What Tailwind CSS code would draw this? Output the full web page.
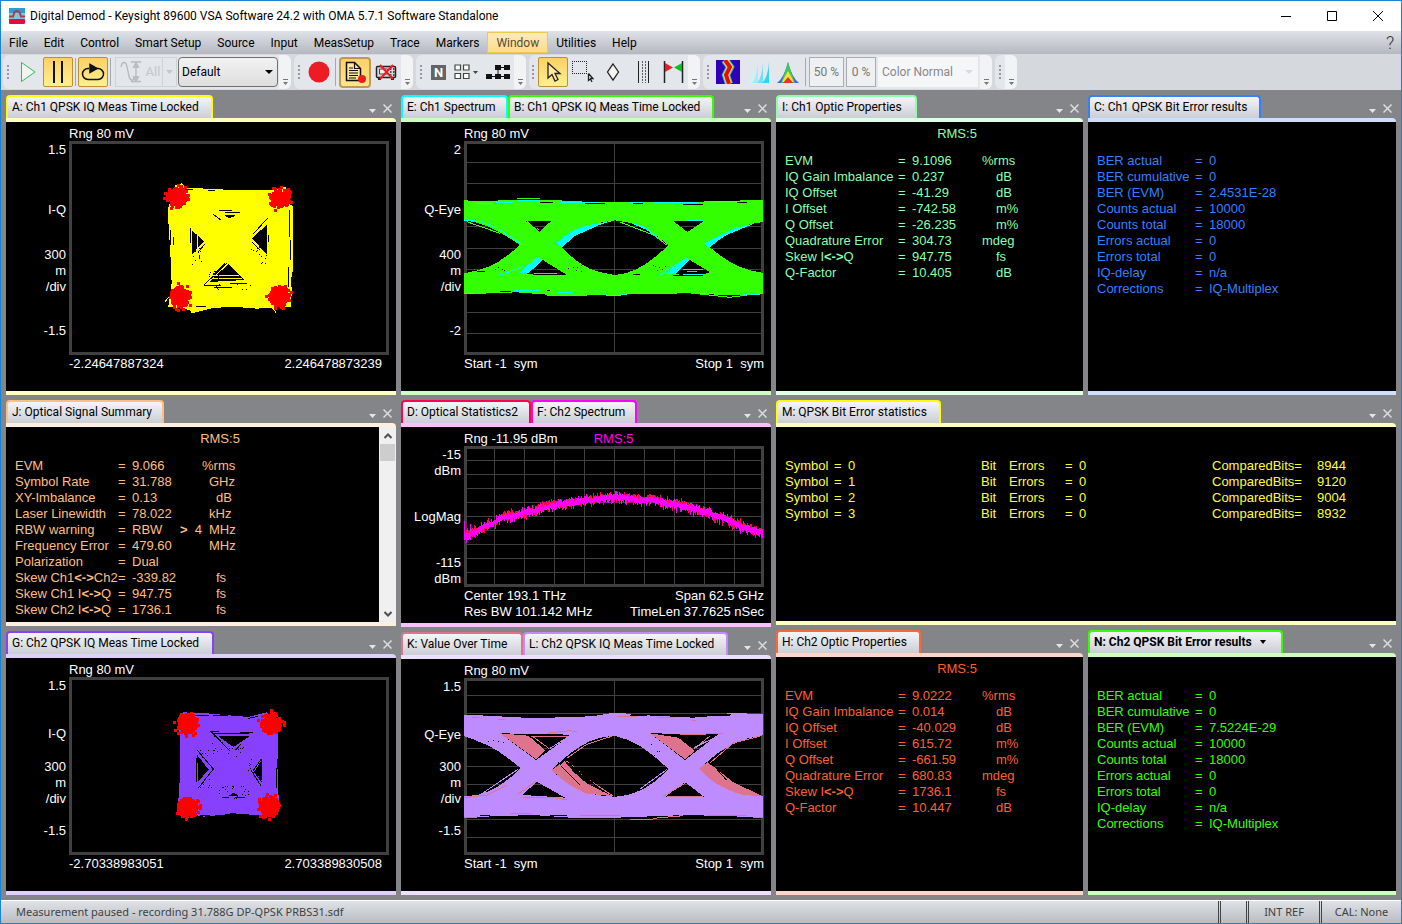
<!DOCTYPE html>
<html lang="en">
<head>
  <meta charset="UTF-8" />
  <meta name="viewport" content="width=device-width, initial-scale=1.0"/>
  <title>Digital Demod - Keysight 89600 VSA Software</title>
  <script src="https://cdn.jsdelivr.net/npm/@tailwindcss/browser@4"></script>
</head>
<body class="h-screen flex flex-col overflow-hidden border border-[#1883d7] bg-[#838589] font-['Roboto','Noto_Sans',sans-serif] text-xs text-black">

  <!-- Title bar -->
  <header class="h-[30px] shrink-0 bg-white flex items-center pl-2">
    <svg class="w-4 h-4 mr-[5px]" viewBox="0 0 16 16">
      <rect width="16" height="12" fill="#7fc4e8"/><rect width="16" height="5" fill="#2e9ad6"/>
      <path d="M0 8.500h4l1.500-4.500q2.500-2 5 0l1.500 4.500h4" fill="none" stroke="#a8423f" stroke-width="2"/>
      <rect y="11" width="16" height="5" rx="1" fill="#e0103a"/>
    </svg>
    <h1 class="grow">Digital Demod - Keysight 89600 VSA Software 24.2 with OMA 5.7.1 Software Standalone</h1>
    <button aria-label="Minimize" class="w-[46px] h-full grid place-items-center"><svg class="w-3 h-3" viewBox="0 0 12 12" stroke="#000" fill="none"><path d="M1 6.500h10"/></svg></button>
    <button aria-label="Maximize" class="w-[46px] h-full grid place-items-center"><svg class="w-3 h-3" viewBox="0 0 12 12" stroke="#000" fill="none"><path d="M1.500 1.500h9v9h-9z"/></svg></button>
    <button aria-label="Close" class="w-[46px] h-full grid place-items-center"><svg class="w-3 h-3" viewBox="0 0 12 12" stroke="#000" fill="none"><path d="M1 1l10 10M11 1L1 11"/></svg></button>
  </header>

  <!-- Menu -->
  <nav class="h-[23px] shrink-0 flex items-center bg-linear-to-b from-[#dfe2e7] to-[#b5b8be]">
    <div id="menu" class="flex grow h-full items-center"></div>
    <button aria-label="Help" class="w-[22px] text-lg font-light text-[#333]">?</button>
  </nav>

  <!-- Toolbar -->
  <div class="h-9 shrink-0 flex items-center gap-[3px] pl-0.5 bg-[#d5d8dd]">
    <div class="w-[288px] h-[34px] flex items-center rounded-md bg-[#e3e6eb]">
      <span class="grip w-[15px] pl-[4px]"></span>
      <button aria-label="Restart" class="w-[22px] mr-[3px]"><svg class="w-5 h-6" viewBox="0 0 20 24"><path d="M3.500 2.500v19L17 12z" fill="#eef5ee" stroke="#3fb54f"/></svg></button>
      <button aria-label="Pause" class="w-[30px] h-[30px] border border-[#c09030] rounded-xs bg-linear-to-b from-[#fbd068] to-[#fff08c] grid place-items-center"><svg class="w-4 h-6" viewBox="0 0 16 24"><path d="M4 1v22M12 1v22" stroke="#111" stroke-width="2"/></svg></button>
      <span class="w-px h-7 mx-[2px] bg-[#a5a8ad]"></span>
      <button aria-label="Repeat" class="w-[30px] h-[30px] border border-[#c09030] rounded-xs bg-linear-to-b from-[#fbd068] to-[#fff08c] grid place-items-center"><svg class="w-6 h-6" viewBox="0 0 24 24" fill="none" stroke="#111" stroke-width="1.500"><path d="M8 8.500H7a5.500 5.500 0 0 0 0 11h10a5.500 5.500 0 0 0 0-11h-3"/><path d="M9 4.500l7 4-7 4z" fill="#111"/></svg></button>
      <span class="w-px h-7 mx-[2px] bg-[#a5a8ad]"></span>
      <button disabled class="w-[62px] h-[30px] ml-[2px] border border-[#cfd2d6] flex items-center text-[#c3c6cb] text-[13px]">
        <svg class="w-[26px] h-6 ml-0.5" viewBox="0 0 26 24" fill="none" stroke="#b6b9be" stroke-width="1.300"><path d="M3 7C4 1 8 1 9 7l2 9c1 5 4 5 5 2M13 2h10M13 21.500h10M18 3v18M15.500 7L18 3l2.500 4zM15.500 17l2.500 4 2.500-4z"/></svg>
        <span class="w-[18px]">All</span>
        <span class="grow h-full border-l border-[#cfd2d6] grid place-items-center"><svg class="w-2 h-1" viewBox="0 0 8 4"><path d="M0 0h7L3.500 4z" fill="#c3c6cb"/></svg></span>
      </button>
      <div class="relative ml-px">
        <select aria-label="Preset" class="w-[100px] h-[30px] appearance-none border border-[#707070] rounded-sm bg-linear-to-b from-[#f2f2f2] to-[#dedede] pl-[3px]"><option>Default</option></select>
        <svg class="absolute right-[5px] top-[13px] w-2 h-1 pointer-events-none" viewBox="0 0 8 4"><path d="M0 0h8L4 4z"/></svg>
      </div>
      <span class="more"></span>
    </div>
    <div class="w-[119px] h-[34px] flex items-center rounded-md bg-[#e3e6eb]">
      <span class="grip w-[13px] pl-[4px]"></span>
      <button aria-label="Record" class="w-[26px]"><svg class="w-[22px] h-[22px] ml-px" viewBox="0 0 22 22"><circle cx="11" cy="11" r="10.500" fill="#ed1c24"/></svg></button>
      <span class="w-px h-7 mx-[2px] bg-[#a5a8ad]"></span>
      <button aria-label="Recording notes" class="w-8 h-[31px] ml-px border-2 border-[#c09a50] rounded-sm bg-linear-to-b from-[#fbd068] to-[#ffe58c] grid place-items-center"><svg class="w-[22px] h-[22px]" viewBox="0 0 22 22"><path d="M2.500 1.500h8l6 6v12h-14z" fill="#ffe9a0" stroke="#111" stroke-width="1.500"/><path d="M10.500 1.500v6h6M5 7h4M5 9.500h9M5 12h9M5 14.500h9M5 17h7" stroke="#111" stroke-width="1.200" fill="none"/><circle cx="18" cy="18" r="4" fill="#ed1c24"/></svg></button>
      <button aria-label="Disconnect hardware" class="w-[22px] ml-1"><svg class="w-[22px] h-5" viewBox="0 0 22 20"><rect x="1.500" y="4.500" width="19" height="11" rx="1" fill="#d8d8d8" stroke="#222" stroke-width="1.500"/><path d="M4.500 7h8v5h-8z" fill="#eee" stroke="#444"/><path d="M15 7h1.500M18 7h1.500M15 10h1.500M18 10h1.500M15 13h1.500M18 13h1.500" stroke="#222" stroke-width="1.500"/><path d="M3 17h3M16 17h3" stroke="#222" stroke-width="2"/><path d="M5 3l13 14M18 3L5 17" stroke="#ed1c24" stroke-width="2"/></svg></button>
      <span class="more"></span>
    </div>
    <div class="w-[110px] h-[34px] flex items-center rounded-md bg-[#e3e6eb]">
      <span class="grip w-[15px] pl-[4px]"></span>
      <button aria-label="Notes" class="w-[15px] h-[15px] bg-[#626468] text-white font-bold text-[13px] leading-[15px]">N</button>
      <button aria-label="Layout" class="ml-2 w-6 flex items-center gap-[3px]"><svg class="w-4 h-4" viewBox="0 0 16 16" fill="#fff" stroke="#444" stroke-width="1.200"><path d="M1 1h5.500v5H1zM9.500 1H15v5H9.500zM1 9.500h5.500v5H1zM9.500 9.500H15v5H9.500z"/></svg><svg class="w-[5px] h-[3px]" viewBox="0 0 5 3"><path d="M0 0h5L2.500 3z" fill="#444"/></svg></button>
      <button aria-label="Block diagram" class="ml-2"><svg class="w-6 h-4" viewBox="0 0 24 16"><path d="M9 1h6v5H9zM18 1h6v5h-6zM0 10h6v5H0zM9 10h6v5H9zM18 10h6v5h-6zM14 3h5v1h-5zM11.500 5h1v6h-1zM5 12h14v1H5z" fill="#111"/></svg></button>
      <span class="more"></span>
    </div>
    <div class="w-[171px] h-[34px] flex items-center rounded-md bg-[#e3e6eb]">
      <span class="grip w-[9px] pl-[3px]"></span>
      <button aria-label="Pointer" class="w-[30px] h-[30px] border border-[#c09030] rounded-xs bg-linear-to-b from-[#fbd068] to-[#fff08c] grid place-items-center"><svg class="w-5 h-6" viewBox="0 0 20 24"><path d="M5 3v15l4-3.500 3 6.500 3-1.500-3-6h5z" fill="#ffe9a0" stroke="#222" stroke-width="1.300"/></svg></button>
      <button aria-label="Select area" class="w-[22px] ml-1"><svg class="w-[22px] h-[22px]" viewBox="0 0 22 22" fill="none" stroke="#222"><path d="M0 .500h15M0 12.500h15M.500 0v13M14.500 0v13" stroke-dasharray="1 1"/><path d="M16.500 12.500v7l2-1.500 1.500 3M16.500 12.500l4.500 5h-3" stroke-width="1.300"/></svg></button>
      <button aria-label="Marker" class="w-4 ml-[11px]"><svg class="w-4 h-5" viewBox="0 0 16 20"><path d="M8 2l5.500 8L8 18l-5.500-8z" fill="#f4f4f4" stroke="#222" stroke-width="1.300"/></svg></button>
      <button aria-label="Band lines" class="w-4 ml-[17px]"><svg class="w-3 h-[22px]" viewBox="0 0 12 22" stroke="#222"><path d="M.500 0v22M10.500 0v22"/><path d="M4.500 0v22M7.500 0v22" stroke-dasharray="2 1" stroke-opacity=".7"/></svg></button>
      <button aria-label="Limits" class="w-[22px] ml-[9px]"><svg class="w-[22px] h-[22px]" viewBox="0 0 22 22"><path d="M1.500 0v22M19.500 0v22" stroke="#222" stroke-width="1.500"/><path d="M2 2l8 4.500L2 11z" fill="#ed1c24"/><path d="M19 2l-8 4.500 8 4.500z" fill="#08c020"/></svg></button>
      <span class="more"></span>
    </div>
    <div class="w-[289px] h-[34px] flex items-center rounded-md bg-[#e3e6eb]">
      <span class="grip w-[13px] pl-[4px]"></span>
      <button aria-label="Spectrogram" class="w-6"><svg class="w-6 h-6" viewBox="0 0 24 24" fill="none"><rect width="24" height="24" fill="#3000b8"/><path d="M9 0l5 7-4 8 3 9" stroke="#20c0e0" stroke-width="8"/><path d="M9 0l5 7-4 8 3 9" stroke="#ffe020" stroke-width="6"/><path d="M9 0l5 7-4 8 3 9" stroke="#e01010" stroke-width="4"/></svg></button>
      <button aria-label="Cumulative history" class="w-6 ml-2"><svg class="w-6 h-6" viewBox="0 0 24 24"><path d="M0 23Q5 18 5 2V23z" fill="#c8f4fb"/><path d="M4 23Q9 18 10 2V23z" fill="#a0ecfa"/><path d="M9 23Q14 18 15 2V23z" fill="#70e0fa"/><path d="M14 23Q20 18 21 2V23z" fill="#30d4fa"/></svg></button>
      <button aria-label="Digital persistence" class="w-6 ml-1"><svg class="w-6 h-6" viewBox="0 0 24 24"><path d="M1 23Q8 18 12 2q4 16 11 21z" fill="#4060e8"/><path d="M5 23Q9 12 12 2q3 10 7 21z" fill="#40c860"/><path d="M6 22l6-11 6 11z" fill="#ffe030"/><path d="M7 23l5-6 5 6z" fill="#e83030"/></svg></button>
      <span class="w-px h-7 ml-[5px] mr-[3px] bg-[#a5a8ad]"></span>
      <input aria-label="Persistence" value="50 %" disabled class="w-[35px] h-[30px] border border-[#a9adb3] bg-[#eef0f2] text-center text-[#777]">
      <input aria-label="Threshold" value="0 %" disabled class="w-[30px] h-[30px] ml-0.5 border border-[#a9adb3] bg-[#eef0f2] text-center text-[#777]">
      <div class="relative ml-0.5">
        <select aria-label="Color map" disabled class="w-[100px] h-[30px] appearance-none bg-[#f5f6f8] pl-1 text-[#888]"><option>Color Normal</option></select>
        <svg class="absolute right-[5px] top-[13px] w-2 h-1 pointer-events-none" viewBox="0 0 8 4"><path d="M0 0h8L4 4z" fill="#d8dadd"/></svg>
      </div>
      <span class="more"></span>
    </div>
    <div class="w-[22px] h-[34px] flex items-center rounded-md bg-[#e3e6eb]">
      <span class="grip w-[10px] pl-[4px]"></span>
      <span class="more"></span>
    </div>
  </div>

  <!-- Trace windows -->
  <main class="grow min-h-0 grid grid-cols-[390fr_370fr_620fr] gap-[5px] p-[5px]">
    <div id="left" class="min-h-0 grid grid-rows-[300fr_226fr_264fr] gap-[5px]"></div>
    <div id="middle" class="min-h-0 grid grid-rows-[300fr_227fr_263fr] gap-[5px]"></div>
    <div id="right" class="min-h-0 grid grid-rows-[300fr_225fr_265fr] grid-cols-[307fr_308fr] gap-[5px]"></div>
  </main>

  <!-- Status bar -->
  <footer class="h-[23px] shrink-0 flex items-center border-t border-white bg-linear-to-b from-[#dfe2e6] to-[#b9bcc1] pl-[15px] font-['Noto_Sans',sans-serif] text-[11px] text-[#404040]">
    <span class="grow">Measurement paused - recording 31.788G DP-QPSK PRBS31.sdf</span>
    <span class="h-full w-[28px] border-l-3 border-double border-[#444]"></span>
    <span class="h-full w-[73px] border-l-3 border-double border-[#444] grid place-items-center">INT REF</span>
    <span class="h-full w-[82px] border-l-3 border-double border-[#444] grid place-items-center">CAL: None</span>
  </footer>

  <script>
    // Menu
    const menu = ["File", "Edit", "Control", "Smart Setup", "Source", "Input", "MeasSetup", "Trace", "Markers", "Window", "Utilities", "Help"];
    document.getElementById("menu").innerHTML = menu.map(m => m === "Window"
      ? `<button class="h-[21px] px-2 border border-[#f0c850] bg-linear-to-b from-[#fdeab8] to-[#fbdc8c] text-[#5a4a30]">${m}</button>`
      : `<button class="px-2">${m}</button>`).join("");

    document.querySelectorAll(".grip").forEach(el => {
      el.innerHTML = `<svg class="w-[3px] h-[15px]" viewBox="0 0 3 15" fill="#96999f"><path d="M0 0h2v2H0zM0 4h2v2H0zM0 8h2v2H0zM0 12h2v2H0z"/></svg>`;
    });
    document.querySelectorAll(".more").forEach(el => {
      el.outerHTML = `<button aria-label="Toolbar options" class="ml-auto w-3 h-full rounded-r-md bg-[#f2f3f5] flex items-end justify-center pb-1"><svg class="w-[5px] h-[6px]" viewBox="0 0 5 6" fill="#777"><path d="M0 0h5v1H0zM0 3h5L2.500 6z"/></svg></button>`;
    });

    // Repeatable noise
    let seed = 7;
    function rnd() {
      seed = (seed * 16807) % 2147483647;
      return seed / 2147483647;
    }

    function blob(cx, cy) {
      let d = "";
      for (let i = 0; i < 150; i++) {
        const a = rnd() * 6.283;
        const r = Math.sqrt(rnd()) * 30 + (rnd() > 0.88 ? 10 : 0);
        d += `M${Math.round(cx + Math.cos(a) * r - 5)} ${Math.round(cy + Math.sin(a) * r - 5)}h9v9h-9z`;
      }
      return `<path d="${d}" fill="#f00"/><circle cx="${cx}" cy="${cy}" r="24" fill="#f00"/>`;
    }

    function specks(x, y, w, h, n) {
      let d = "";
      for (let i = 0; i < n; i++) d += `M${Math.round(x + rnd() * w)} ${Math.round(y + rnd() * h)}h3v3h-3z`;
      return `<path d="${d}" fill="#000"/>`;
    }

    function spectrum(color, bias) {
      const pts = [[192, 422], [240, 402], [310, 365], [380, 350], [430, 335], [540, 317], [640, 308], [750, 315], [830, 328], [910, 350], [980, 372], [1030, 395], [1090, 414]];
      let d = "", k = 0, drift = 0;
      for (let x = 193; x < 1090; x += 3) {
        while (x > pts[k + 1][0]) k++;
        const [x0, y0] = pts[k], [x1, y1] = pts[k + 1];
        drift = drift * 0.8 + (rnd() - 0.5) * 5;
        const y = y0 + (y1 - y0) * (x - x0) / (x1 - x0) + bias + drift;
        d += `M${x} ${Math.round(y - 5 - rnd() * rnd() * 16)}V${Math.round(y + 6 + rnd() * rnd() * 20)}`;
      }
      return `<path d="${d}M193 378v50M199 415v28M211 388v30M1087 402v28" stroke="${color}" stroke-width="3"/>`;
    }

    function plot(x, y, w, h, cols, rows, trace) {
      let d = "";
      for (let i = 1; i < cols; i++) d += `M${x + w * i / cols} ${y}v${h}`;
      for (let i = 1; i < rows; i++) d += `M${x} ${y + h * i / rows}h${w}`;
      return `<svg class="absolute inset-0 w-full h-full" viewBox="${x} ${y} ${w} ${h}" preserveAspectRatio="none" shape-rendering="crispEdges" fill="none">
        <path d="${d}" stroke="#404040" stroke-width="3"/>
        <rect x="${x + 4.5}" y="${y + 4.5}" width="${w - 9}" height="${h - 9}" stroke="#404040" stroke-width="9"/>
        ${trace}
      </svg>`;
    }

    const iq1 = `
      <path fill="#ff0" fill-rule="evenodd" d="M525 195L545 190 560 203 700 210 830 209 858 200 862 250 880 258 877 500 872 560 770 566 700 560 640 564 575 580 570 570 505 560 515 490 511 400 503 270zM672 285h34L700 292 684 293zM577 332L612 364 577 402zM800 315V402L755 355zM685 432L735 480 628 486z"/>
      <path stroke="#000" stroke-width="3" d="M556 208h22M625 211h20M670 209h26M766 208h50M512 330v45M519 350v24M868 270v80M872 360v60M864 440v60M874 470v30M614 372L592 400M640 283L662 300M658 270h38M675 276h46M570 325V370M806 345v20M802 295L760 342M756 366L780 390M612 495L680 430M638 466L676 430M612 495h50M690 490h50M642 502h55M588 558h30"/>
      <path stroke="#ff0" stroke-width="3" d="M592 330V400M640 474h85M640 466h76M495 545L512 525M815 560L828 578"/>`
      + specks(575, 380, 30, 55, 12) + specks(750, 370, 50, 65, 16) + specks(610, 440, 50, 55, 12) + specks(640, 490, 110, 18, 10)
      + blob(532, 234) + blob(840, 238) + blob(541, 532) + blob(838, 530);

    const iq2 = `
      <path fill="#8840ff" fill-rule="evenodd" d="M550 262L620 265 745 276 800 262 836 290 832 420 838 540 815 572 700 566 610 575 540 560 534 540 541 440 538 300zM655 334h93L700 366zM592 390L626 434 594 470zM785 405V465L763 440zM685 512L702 503 716 512z"/>
      <path stroke="#000" stroke-width="3" d="M580 270h48M640 270h45M745 280l30-6M634 320L688 376M636 326h110M630 318h26M720 322h40M724 356L706 376M588 400V470M592 376L640 432 596 488M786 472L760 436 784 402M752 434L784 484M666 518h22M704 518h32M828 430v60M834 440v70M600 572h30M690 564h18"/>`
      + specks(600, 370, 45, 30, 8) + specks(595, 460, 40, 30, 8) + specks(735, 400, 40, 50, 8) + specks(655, 480, 90, 40, 26) + specks(620, 330, 50, 50, 8) + specks(680, 365, 50, 30, 10)
      + blob(562, 298) + blob(814, 298) + blob(564, 548) + blob(810, 546);

    const eye1 = `
      <path fill="#3f0" fill-rule="evenodd" d="M192 241L240 243 350 240 420 240 590 246 720 246 860 246 1000 242 1089 240V522L1000 526 860 520 645 524 560 524 440 524 350 517 192 523zM192 300C260 310 300 335 360 375 300 430 260 448 192 460zM485 382C530 330 580 305 645 301 710 305 760 335 805 375 750 430 700 462 645 465 580 462 530 430 485 382zM930 382C980 335 1030 312 1089 305V459C1020 448 980 425 930 382zM375 302H455L420 333zM820 303H912L862 336zM425 418L500 464 380 461zM866 418L930 456 905 465 815 463z"/>
      <path fill="#0ff" d="M468 368L485 382 525 348 600 314 640 302 570 314 520 330zM912 370L925 382 980 345 1060 312 1085 306 1010 322zM412 410L428 420 385 460 355 460zM858 412L868 420 825 463 795 463zM690 308L740 330 795 372 775 352 735 320z"/>
      <path stroke="#0ff" stroke-width="3" d="M228 252L340 246M350 242h70M480 247h120M690 246h40M760 248h130M930 244h90M192 301L240 304 290 324 365 372M860 300h50M430 298h26M292 468L370 440M340 512h80M470 516h50M610 524L645 528 680 522M780 465L850 420M848 462h60M900 520h60M1030 522h50M192 520h30"/>
      <path stroke="#3f0" stroke-width="3" d="M350 236h70M425 240h60M380 304L418 331M490 408L540 440 600 458 645 467M660 306L760 345 800 375M200 305L300 340M402 460h70M850 447h60M860 455h30M440 526h120M900 522L990 532 1050 524"/>
      <path stroke="#000" stroke-width="3" d="M420 247h40M555 250h60M700 249h30M850 252h60M1010 248h30M230 455h24M440 512h10M300 514h34M700 462h20M385 304L420 335M400 464h90M820 467h90"/>`
      + specks(490, 430, 60, 30, 6) + specks(270, 440, 60, 20, 5) + specks(760, 435, 40, 20, 6);

    const eye2 = `
      <path fill="#bf8cff" fill-rule="evenodd" d="M192 269L240 271 390 279 540 276 645 266 760 272 880 278 1000 268 1089 268V578L1000 574 860 570 650 578 540 580 400 570 192 577zM192 334C250 345 310 385 362 430 300 490 250 515 192 513zM455 435C540 350 590 335 645 333 710 345 760 390 805 432 750 490 700 512 645 515 560 515 500 480 455 435zM900 430C960 370 1020 340 1089 330V514C1010 512 950 475 900 430zM300 325L515 329 408 405zM750 325L955 328 855 405zM410 470L495 518 368 510zM855 472L912 515 795 516z"/>
      <path fill="#dd738c" d="M455 435L493 408 520 440 560 475 635 513 560 506C520 490 490 470 455 435zM896 431L922 412 950 432 1000 472 1089 514 1030 510C960 490 930 465 896 431zM300 325L385 332 435 375 408 402zM750 325L835 338 885 378 855 402z"/>
      <path stroke="#dd738c" stroke-width="3" d="M215 277h22M294 283h22M650 274h60M770 276h50M876 287h12M440 325L510 317 530 320M390 334h120M395 332L448 372M500 408L560 460 640 514M500 400L560 358 635 334M930 414L1000 354 1085 332M840 330L970 325M930 333L882 372M192 518L260 510 320 480M355 506L408 470M370 516L450 516 500 524M790 514L855 475M800 514h110M330 566h65M192 576h40M540 572h120M690 582h70M760 580L850 572M920 570h120M1060 576h30"/>
      <path stroke="#bf8cff" stroke-width="3" d="M450 370L510 332M882 368L960 330M192 330L300 375M240 510L355 432M720 492L800 434M610 268L680 264M980 265h60"/>
      <path stroke="#000" stroke-width="3" d="M384 330L445 372M482 422L540 480M500 410L610 500M938 418L980 466M560 272h30M690 270h50M940 270h50M240 572h30M450 572h50M700 576h60M900 574h30"/>`
      + specks(470, 400, 30, 30, 5) + specks(250, 340, 60, 30, 6) + specks(730, 340, 50, 50, 6);

    // Plot window body: scale labels on the left, plot, captions above and below
    function graph(top, labels, svg, bottom) {
      return `<div class="h-full grid grid-cols-[63px_1fr] grid-rows-[19px_1fr_36px] pr-[7px] text-white">
        <div class="col-start-2 flex items-start pt-1 gap-9 leading-4">${top}</div>
        <div class="row-start-2 flex flex-col justify-between text-right leading-4 pt-px pr-[3px] ${labels.length === 3 ? "pb-0" : "pb-4"}">${labels.join("")}</div>
        <div class="row-start-2 col-start-2 relative">${svg}</div>
        <div class="row-start-3 col-start-2 pt-px leading-4 whitespace-pre">${bottom}</div>
      </div>`;
    }

    function caption(a, b) {
      return `<div class="flex justify-between"><span>${a}</span><span>${b}</span></div>`;
    }

    const scale = (max, name, div, min) => [`<p>${max}</p>`, `<p class="pt-4">${name}</p>`, `<p>${div}<br>m<br>/div</p>`, `<p>${min}</p>`];

    // Readout window body, a unit starts 0, 1 or 2 characters in
    const indent = ["pl-0", "pl-[7px]", "pl-[14px]"];
    function readout(rms, color, labelWidth, rows, valueWidth) {
      return `<div class="h-full overflow-hidden ${color}">
        <p class="h-[31px] pt-1 leading-4 text-center">${rms}</p>
        <table class="table-fixed ml-[9px] w-[260px] leading-4 whitespace-pre">
          <tbody>${rows.map(([label, value, unit = "", n = 0]) => `<tr>
            <th scope="row" class="${labelWidth} text-left font-normal">${label}</th>
            <td class="w-[14px]">=</td><td class="${valueWidth}">${value}</td><td class="${indent[n]}">${unit}</td>
          </tr>`).join("")}</tbody>
        </table>
      </div>`;
    }

    function optic(color, v) {
      const names = ["EVM", "IQ Gain Imbalance", "IQ Offset", "I Offset", "Q Offset", "Quadrature Error", "Skew I<b>&lt;-&gt;</b>Q", "Q-Factor"];
      const units = [["%rms", 0], ["dB", 2], ["dB", 2], ["m%", 2], ["m%", 2], ["mdeg", 0], ["fs", 2], ["dB", 2]];
      return readout(`<span class="ml-[55px]">RMS:5</span>`, color, "w-[113px]", names.map((n, i) => [n, v[i], ...units[i]]), "w-[70px]");
    }

    function ber(color, evm) {
      return readout("", color, "w-[98px]", [
        ["BER actual", "0"], ["BER cumulative", "0"], ["BER (EVM)", evm], ["Counts actual", "10000"], ["Counts total", "18000"],
        ["Errors actual", "0"], ["Errors total", "0"], ["IQ-delay", "n/a"], ["Corrections", "IQ-Multiplex"]
      ], "w-[100px]");
    }

    const summary = `<div class="h-full flex">
      <div class="grow">${readout(`<span class="ml-[55px]">RMS:5</span>`, "text-[#ffbf80]", "w-[103px]", [
        ["EVM", "9.066", "%rms", 0], ["Symbol Rate", "31.788", "GHz", 1], ["XY-Imbalance", "0.13", "dB", 2], ["Laser Linewidth", "78.022", "kHz", 1],
        ["RBW warning", `<span class="flex justify-between"><span>RBW</span><span><b>&gt;</b>  4</span></span>`, "MHz", 1], ["Frequency Error", "479.60", "MHz", 1],
        ["Polarization", "Dual"], ["Skew Ch1<b>&lt;-&gt;</b>Ch2", "-339.82", "fs", 2], ["Skew Ch1 I<b>&lt;-&gt;</b>Q", "947.75", "fs", 2], ["Skew Ch2 I<b>&lt;-&gt;</b>Q", "1736.1", "fs", 2]
      ], "w-[70px]")}</div>
      <div class="w-[17px] bg-[#f0f0f0] flex flex-col items-center">
        <button aria-label="Scroll up" class="h-[17px]"><svg class="w-2 h-[6px]" viewBox="0 0 8 6"><path d="M.500 5L4 1.500 7.500 5" fill="none" stroke="#505050" stroke-width="2"/></svg></button>
        <div class="w-[15px] h-[17px] bg-[#cdcdcd]"></div>
        <button aria-label="Scroll down" class="h-[17px] mt-auto"><svg class="w-2 h-[6px]" viewBox="0 0 8 6"><path d="M.500 1L4 4.500 7.500 1" fill="none" stroke="#505050" stroke-width="2"/></svg></button>
      </div>
    </div>`;

    const statistics = `<table class="table-fixed mt-[31px] ml-[9px] leading-4 text-[#ffff33]">
      <tbody>${["8944", "9120", "9004", "8932"].map((n, i) => `<tr>
        <th scope="row" class="w-[49px] text-left font-normal">Symbol</th><td class="w-[14px]">=</td><td class="w-[133px]">${i}</td>
        <td class="w-[28px]">Bit</td><td class="w-[56px]">Errors</td><td class="w-[14px]">=</td><td class="w-[133px]">0</td>
        <td class="w-[105px]">ComparedBits=</td><td>${n}</td>
      </tr>`).join("")}</tbody>
    </table>`;

    const windows = [
      { to: "left", strip: "bg-[#ffffbf]", tabs: [["A: Ch1 QPSK IQ Meas Time Locked", "border-[#ffff00] w-[207px]"]],
        body: graph("<p>Rng 80 mV</p>", scale("1.5", "I-Q", "300", "-1.5"), plot(207, 63, 960, 642, 1, 1, iq1), `<div class="pr-[7px]">${caption("-2.24647887324", "2.246478873239")}</div>`) },
      { to: "left", strip: "bg-[#ffefdf]", tabs: [["J: Optical Signal Summary", "border-[#ffbf80] w-[158px]"]], body: summary },
      { to: "left", strip: "bg-[#dfcfff]", tabs: [["G: Ch2 QPSK IQ Meas Time Locked", "border-[#8840ff] w-[208px]"]],
        body: graph("<p>Rng 80 mV</p>", scale("1.5", "I-Q", "300", "-1.5"), plot(207, 156, 960, 534, 1, 1, iq2), `<div class="pr-[7px]">${caption("-2.70338983051", "2.703389830508")}</div>`) },
      { to: "middle", strip: "bg-[#ccffbf]", tabs: [["E: Ch1 Spectrum", "border-[#00ffff] w-[107px]"], ["B: Ch1 QPSK IQ Meas Time Locked", "border-[#33ff00] w-[206px]"]],
        body: graph("<p>Rng 80 mV</p>", scale("2", "Q-Eye", "400", "-2"), plot(192, 63, 900, 642, 2, 10, eye1), caption("Start -1  sym", "Stop 1  sym")) },
      { to: "middle", strip: "bg-[#ffbfff]", tabs: [["D: Optical Statistics2", "border-[#ff0055] w-[130px]"], ["F: Ch2 Spectrum", "border-[#ff00ff] w-[106px]"]],
        body: graph(`<p>Rng -11.95 dBm</p><p class="text-[#f0f]">RMS:5</p>`, ["<p>-15<br>dBm</p>", "<p>LogMag</p>", "<p>-115<br>dBm</p>"],
          plot(192, 153, 900, 423, 10, 10, spectrum("#ff0055", -1) + spectrum("#ff00ff", 1)), caption("Center 193.1 THz", "Span 62.5 GHz") + caption("Res BW 101.142 MHz", "TimeLen 37.7625 nSec")) },
      { to: "middle", strip: "bg-[#efdfff]", tabs: [["K: Value Over Time", "border-[#dd738c] w-[122px]"], ["L: Ch2 QPSK IQ Meas Time Locked", "border-[#bf8cff] w-[205px]"]],
        body: graph("<p>Rng 80 mV</p>", scale("1.5", "Q-Eye", "300", "-1.5"), plot(192, 159, 900, 531, 2, 10, eye2), caption("Start -1  sym", "Stop 1  sym")) },
      { to: "right", strip: "bg-[#dfffe6]", tabs: [["I: Ch1 Optic Properties", "border-[#8cffaa] w-[141px]"]],
        body: optic("text-[#8cffaa]", ["9.1096", "0.237", "-41.29", "-742.58", "-26.235", "304.73", "947.75", "10.405"]) },
      { to: "right", strip: "bg-[#ccdfff]", tabs: [["C: Ch1 QPSK Bit Error results", "border-[#3380ff] w-[173px]"]], body: ber("text-[#3380ff]", "2.4531E-28") },
      { to: "right", strip: "bg-[#ffffbf]", wide: true, tabs: [["M: QPSK Bit Error statistics", "border-[#ffff00] w-[165px]"]], body: statistics },
      { to: "right", strip: "bg-[#ffd5c8]", tabs: [["H: Ch2 Optic Properties", "border-[#ff6633] w-[145px]"]],
        body: optic("text-[#ff5f30]", ["9.0222", "0.014", "-40.029", "615.72", "-661.59", "680.83", "1736.1", "10.447"]) },
      { to: "right", strip: "bg-[#ccffbf]", active: true, tabs: [["N: Ch2 QPSK Bit Error results", "border-[#33ff00] w-[195px]"]], body: ber("text-[#33ff00]", "7.5224E-29") }
    ];

    windows.forEach(w => {
      const section = document.createElement("section");
      section.className = w.wide ? "min-h-0 min-w-0 flex flex-col col-span-2" : "min-h-0 min-w-0 flex flex-col";
      section.innerHTML = `
        <div class="h-[23px] shrink-0 flex items-end pr-1">
          ${w.tabs.map(([name, style]) => `<button class="h-[23px] border-2 border-b-0 rounded-t-sm bg-linear-to-b from-[#f4f5f8] to-[#cbced5] pl-1 pb-0.5 flex items-center whitespace-nowrap ${w.active ? "font-bold" : ""} ${style}">${name}${w.active ? `<svg class="ml-2 w-[6px] h-1" viewBox="0 0 6 4"><path d="M0 0h6L3 4z"/></svg>` : ""}</button>`).join("")}
          <button aria-label="Window menu" class="ml-auto mr-[7px] mb-[5px]"><svg class="w-[7px] h-1" viewBox="0 0 7 4"><path d="M0 0h7L3.500 4z" fill="#e4e5e7"/></svg></button>
          <button aria-label="Close window" class="mb-[5px]"><svg class="w-[9px] h-[9px]" viewBox="0 0 9 9"><path d="M.500.500l8 8M8.500.500l-8 8" stroke="#dcdde0" stroke-width="1.500"/></svg></button>
        </div>
        <div class="h-1 shrink-0 rounded-tr-sm ${w.strip}"></div>
        <div class="grow min-h-0 bg-black overflow-hidden font-['Liberation_Sans',sans-serif] text-[13px]">${w.body}</div>
        <div class="h-1 shrink-0 ${w.strip}"></div>`;
      document.getElementById(w.to).appendChild(section);
    });
  </script>

</body>
</html>
